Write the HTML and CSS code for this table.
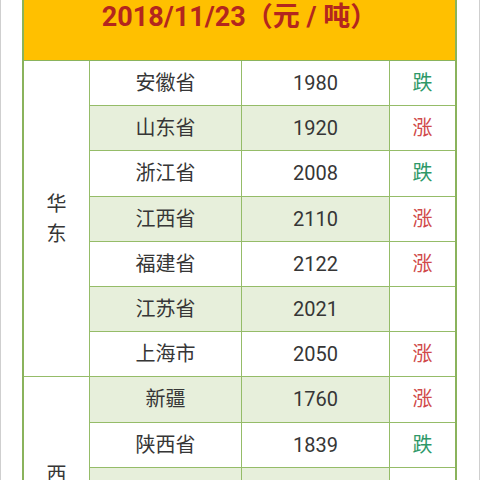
FILE: index.html
```html
<!DOCTYPE html>
<html lang="zh-CN">
<head>
<meta charset="utf-8">
<title>价格表</title>
<link rel="stylesheet" href="styles.css">
</head>
<body>
<div class="screen">
  <table class="price-table">
    <colgroup>
      <col class="c-region">
      <col class="c-prov">
      <col class="c-price">
      <col class="c-trend">
    </colgroup>
    <thead>
      <tr class="head-row"><th colspan="4" class="title">2018/11/23（元 / 吨）</th></tr>
    </thead>
    <tbody>
      <tr>
        <td class="region" rowspan="7">华<br>东</td>
        <td class="prov">安徽省</td><td class="price">1980</td><td class="trend down">跌</td>
      </tr>
      <tr class="alt"><td class="prov">山东省</td><td class="price">1920</td><td class="trend up">涨</td></tr>
      <tr><td class="prov">浙江省</td><td class="price">2008</td><td class="trend down">跌</td></tr>
      <tr class="alt"><td class="prov">江西省</td><td class="price">2110</td><td class="trend up">涨</td></tr>
      <tr><td class="prov">福建省</td><td class="price">2122</td><td class="trend up">涨</td></tr>
      <tr class="alt"><td class="prov">江苏省</td><td class="price">2021</td><td class="trend"></td></tr>
      <tr><td class="prov">上海市</td><td class="price">2050</td><td class="trend up">涨</td></tr>
      <tr class="alt">
        <td class="region" rowspan="5">西<br>北</td>
        <td class="prov">新疆</td><td class="price">1760</td><td class="trend up">涨</td>
      </tr>
      <tr><td class="prov">陕西省</td><td class="price">1839</td><td class="trend down">跌</td></tr>
      <tr class="alt"><td class="prov"></td><td class="price"></td><td class="trend"></td></tr>
      <tr><td class="prov"></td><td class="price"></td><td class="trend"></td></tr>
      <tr class="alt"><td class="prov"></td><td class="price"></td><td class="trend"></td></tr>
    </tbody>
  </table>
</div>
</body>
</html>
```

FILE: styles.css
```css
html, body {
  margin: 0;
  padding: 0;
  background: #ffffff;
}

body {
  border-left: 1px solid #cfcfcf;
  border-right: 1px solid #cfcfcf;
  font-family: Roboto, "Noto Sans CJK SC", sans-serif;
}

.screen {
  padding-left: 21px;
}

.price-table {
  width: 435px;
  table-layout: fixed;
  border-collapse: separate;
  border-spacing: 0;
  border: 2px solid #8ab35c;
  border-top: 0;
}

.c-region { width: 66px; }
.c-prov { width: 152px; }
.c-price { width: 148px; }
.c-trend { width: 65px; }

.title {
  background: #ffc000;
  color: #b3261e;
  font-size: 27px;
  font-weight: 700;
  line-height: 34px;
  padding: 0 0 26px;
  vertical-align: top;
  text-align: center;
  border-bottom: 1px solid #8ab35c;
}

.price-table tbody tr {
  height: 45.2px;
}

.price-table td {
  padding: 0;
  text-align: center;
  vertical-align: middle;
  font-size: 20px;
  line-height: 24px;
  color: #363636;
  border-right: 1px solid #95bc68;
  border-bottom: 1px solid #95bc68;
  background: #ffffff;
}

.price-table td.trend {
  border-right: 0;
}

.price-table td.region {
  line-height: 30px;
}

.alt .prov,
.alt .price {
  background: #e7efdb;
}

.up {
  color: #d04a4a !important;
}

.down {
  color: #2e9868 !important;
}
```
